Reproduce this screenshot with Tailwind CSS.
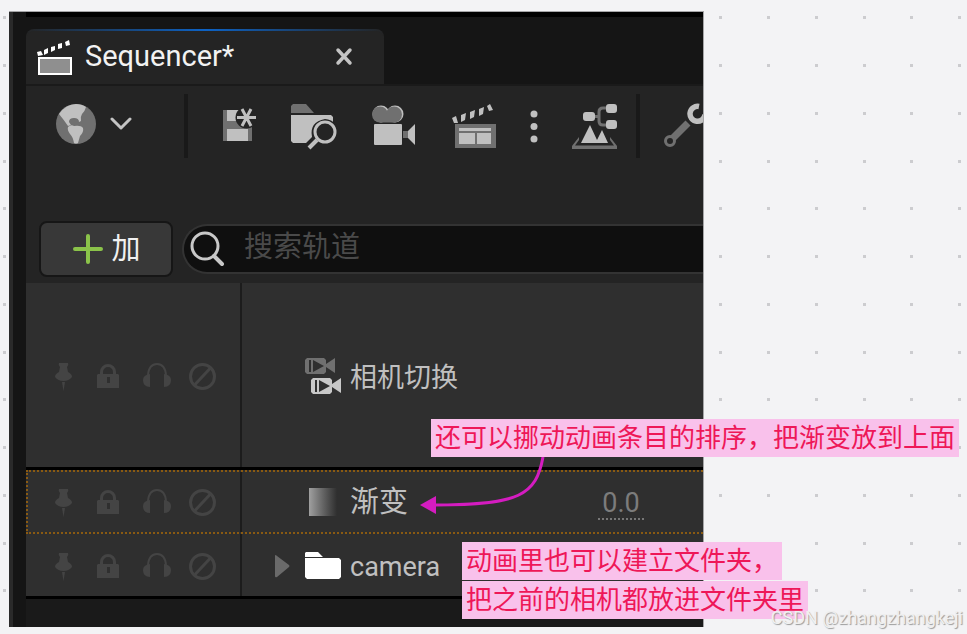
<!DOCTYPE html>
<html lang="zh-CN">
<head>
  <meta charset="UTF-8" />
  <meta name="viewport" content="width=device-width, initial-scale=1.0" />
  <script src="https://cdn.jsdelivr.net/npm/@tailwindcss/browser@4"></script>
  <title>Sequencer</title>
</head>
<body class="bg-[#f3f3f5] font-[Roboto,'Noto_Sans_CJK_SC',sans-serif]">
  <div class="relative min-h-screen overflow-hidden pt-[11px] pr-[263px] pb-2 pl-[9px]">

    <!-- dotted canvas -->
    <svg class="absolute inset-0 h-full w-full" aria-hidden="true">
      <defs>
        <pattern id="dots" x="3" y="16" width="191" height="191" patternUnits="userSpaceOnUse">
          <path fill="#cccccf" d="M0 0h3v3h-3zM48 0h3v3h-3zM96 0h3v3h-3zM143 0h3v3h-3zM0 48h3v3h-3zM48 48h3v3h-3zM96 48h3v3h-3zM143 48h3v3h-3zM0 96h3v3h-3zM48 96h3v3h-3zM96 96h3v3h-3zM143 96h3v3h-3zM0 144h3v3h-3zM48 144h3v3h-3zM96 144h3v3h-3zM143 144h3v3h-3z" />
        </pattern>
        <symbol id="pin" viewBox="0 0 32 32">
          <path fill="#444" d="M12 3h9q1 2-1 4l1 5q4 2 4 5-3 4-8.500 4T8 17q0-3 4-5l1-5q-2-2-1-4z" />
          <path fill="#444" d="M15 22h3l-1.500 9z" />
        </symbol>
        <symbol id="lock" viewBox="0 0 32 32">
          <path fill="none" stroke="#444" stroke-width="3" d="M8.500 15v-3a6.500 6.500 0 0 1 13 0v3" />
          <path fill="#444" fill-rule="evenodd" d="M5 14h20l1 1v13H4V15zM14 17v6h3v-6z" />
        </symbol>
        <symbol id="headphones" viewBox="0 0 32 32">
          <path fill="none" stroke="#444" stroke-width="2" d="M9 15q1-11 9-11t9 11" />
          <path fill="#444" d="M11 14v13q-7 0-7-7 0-5 7-6zM25 14v13q7 0 7-7 0-5-7-6z" />
        </symbol>
        <symbol id="ban" viewBox="0 0 32 32">
          <circle cx="17.500" cy="16.500" r="12" fill="none" stroke="#444" stroke-width="3" />
          <path stroke="#444" stroke-width="3" d="M9.500 25l16-17" />
        </symbol>
      </defs>
      <rect width="100%" height="100%" fill="url(#dots)" />
    </svg>

    <!-- editor window -->
    <main class="relative overflow-hidden border-t border-r border-[#a5a5a7] bg-[#151515]">
      <div class="border-l-4 border-[#2a2a2a] pl-[13px]">
        <div class="h-[5px] bg-black"></div>

        <div class="flex pt-3">
          <div class="w-[358px] rounded-t-lg bg-[linear-gradient(to_right,#242424,#0d62c4,#242424)] pt-[2px]">
            <div class="flex h-[53px] items-center rounded-t-lg bg-[#242424] pr-[30px] pb-[3px] pl-[10px]">
              <svg class="h-10 w-10" viewBox="0 0 40 40" aria-hidden="true">
                <path fill="#fff" d="M1 16l4-1 2 4-5 1zM8 14l4-2 0 5-4 2zM15 11l4-1 0 4-4 2zM22 8l4-1 0 5-4 1zM29 6l4-2 1 5-4 1z" />
                <rect x="3" y="22" width="32" height="16" fill="#8f8f8f" stroke="#fff" stroke-width="2" />
              </svg>
              <h1 class="ml-[9px] text-[29px] leading-9 text-[#f2f2f2]">Sequencer*</h1>
              <button class="ml-auto" aria-label="关闭">
                <svg class="h-5 w-5" viewBox="0 0 20 20"><path stroke="#c4c4c4" stroke-width="3.500" stroke-linecap="round" d="M4 4l12 13M16 4L4 17" /></svg>
              </button>
            </div>
          </div>
        </div>

        <!-- toolbar -->
        <div class="border-t-2 border-[#1a1a1a] bg-[#242424]">
          <div class="flex h-20 items-center overflow-hidden pl-[30px] [&_svg]:h-12 [&>*]:shrink-0">
            <button class="flex gap-[14px]" aria-label="世界">
              <svg class="w-10" viewBox="0 0 40 48">
                <circle cx="20" cy="22" r="20" fill="#707070" />
                <path fill="#c0c0c0" d="M3 12Q10 2 20 2q6 0 10 3-1 4-4 7-2 3-1 7l-2 1q0-4-5-4-5 0-5 4l2 3-3 1Q8 18 3 12z" />
                <path fill="#c0c0c0" d="M12 25q3-3 6-1 7-1 9 2 1 4-3 8l-2 7q-2 1-4 0-1-6-4-9-3-4-2-7z" />
              </svg>
              <svg class="w-[22px]" viewBox="0 0 22 48"><path fill="none" stroke="#c4c4c4" stroke-width="3" stroke-linecap="round" stroke-linejoin="round" d="M2 17l9 9 9-9" /></svg>
            </button>
            <div class="ml-[52px] h-16 w-1 bg-[#191919]"></div>
            <div class="ml-[21px] flex gap-8">
              <button aria-label="保存">
                <svg class="w-12" viewBox="0 0 48 48">
                  <path fill="#707070" d="M14 8h29v31H14z" />
                  <path fill="#c0c0c0" d="M18 8h14v11H18zM18 27h21v12H18z" />
                  <circle cx="37.500" cy="15.500" r="11" fill="#242424" />
                  <path stroke="#c0c0c0" stroke-width="3" d="M28 15.500h19M33 7l9 17M42 7l-9 17" />
                </svg>
              </button>
              <button aria-label="浏览">
                <svg class="w-12" viewBox="0 0 48 48">
                  <path fill="#707070" d="M4 2h13l8 9H2V4z" />
                  <path fill="#c0c0c0" d="M2 13h40l2 2v26H4l-2-2z" />
                  <path fill="#242424" d="M17 41l6-6q-3-15 13-18 6 0 12 6v25H17z" />
                  <circle cx="36" cy="30" r="10" fill="#242424" stroke="#c0c0c0" stroke-width="3" />
                  <path stroke="#c0c0c0" stroke-width="4" d="M28 38l-8 8" />
                </svg>
              </button>
              <button aria-label="创建摄像机">
                <svg class="w-12" viewBox="0 0 48 48">
                  <g fill="#c0c0c0"><circle cx="12" cy="12" r="8.500" /><circle cx="26" cy="12" r="8.500" /></g>
                  <g fill="#707070"><circle cx="11" cy="12.500" r="8" /><circle cx="25" cy="12.500" r="8" /><path d="M11 12h15v8.500H11z" /></g>
                  <rect x="5" y="22" width="28" height="21" rx="1" fill="#c0c0c0" />
                  <path fill="#707070" d="M34 29h5v7h-5z" />
                  <path fill="#c0c0c0" d="M39 29l7-7v21l-7-7z" />
                </svg>
              </button>
              <button aria-label="渲染影片">
                <svg class="w-12" viewBox="0 0 48 48">
                  <path fill="#c0c0c0" d="M3 16l4-2 2 7H5zM12 13l5-2-1 7-4 2zM21 10l5-2-1 7-4 2zM30 7l5-2-1 7-4 2zM38 4l3-2 3 6-4 1z" />
                  <rect x="6" y="22" width="41" height="24" fill="#707070" />
                  <path fill="#c0c0c0" d="M10 26h32v3H10zM10 31h16v11H10zM28 31h14v11H28z" />
                </svg>
              </button>
              <button aria-label="更多">
                <svg class="w-[10px]" viewBox="0 0 10 48" fill="#c0c0c0"><circle cx="5" cy="12" r="3.500" /><circle cx="5" cy="24.500" r="3.500" /><circle cx="5" cy="37" r="3.500" /></svg>
              </button>
              <button aria-label="导演蓝图">
                <svg class="w-12" viewBox="0 0 48 48">
                  <path fill="none" stroke="#707070" stroke-width="3" d="M24 14.500h4M36 6h-4q-4 0-4 4v9q0 4 4 4h4" />
                  <g fill="#c0c0c0"><rect x="12" y="10" width="12" height="9" rx="3" /><rect x="35" y="2" width="11" height="9" rx="3" /><rect x="35" y="18" width="11" height="9" rx="3" /></g>
                  <path fill="#c0c0c0" d="M10 41l9-18 7 15 5-10 6 13z" />
                  <path fill="#707070" d="M8 35v3l-4 5.500h39L39 38v-3l7 9v3H1v-3z" />
                </svg>
              </button>
            </div>
            <div class="ml-[17px] h-16 w-1 bg-[#191919]"></div>
            <button class="ml-[23px]" aria-label="选项">
              <svg class="w-12" viewBox="0 0 48 48" fill="none">
                <path stroke="#707070" stroke-width="7" d="M10 36l15-15" />
                <circle cx="7" cy="39" r="4.500" fill="#242424" stroke="#707070" stroke-width="3" />
                <path stroke="#c0c0c0" stroke-width="5.500" d="M36 4.500a7.500 7.500 0 1 0 6 8" />
              </svg>
            </button>
          </div>

          <div class="flex items-center gap-[9px] pt-[55px] pb-[6px] pl-[13px]">
            <button class="flex h-14 w-[134px] shrink-0 items-center justify-center gap-2 rounded-lg border-2 border-[#161616] bg-[#383838] text-[29px] leading-9 text-[#f0f0f0]">
              <svg class="h-8 w-8" viewBox="0 0 32 32"><path stroke="#8bc34a" stroke-width="4" stroke-linecap="round" d="M17 3v26M4 16h26" /></svg>
              加
            </button>
            <label class="flex h-[50px] min-w-0 flex-1 items-center rounded-l-full border-2 border-r-0 border-[#333] bg-[#0f0f0f] pl-[6px]">
              <svg class="h-9 w-9 shrink-0" viewBox="0 0 36 36" fill="none" stroke="#c8c8c8" stroke-linecap="round"><circle cx="15" cy="15" r="13" stroke-width="3" /><path stroke-width="4" d="M24 25l8 8" /></svg>
              <input type="search" placeholder="搜索轨道" aria-label="搜索轨道" class="ml-[18px] min-w-0 flex-1 bg-transparent pb-1 text-[29px] leading-9 text-[#c0c0c0] outline-none placeholder:text-[#4a4a4a]" />
            </label>
          </div>
        </div>

        <!-- tracks -->
        <ul class="bg-[#2f2f2f] text-[#c0c0c0] [&_use]:pointer-events-none">
          <li class="flex h-[184px] items-stretch">
            <div class="flex w-[216px] shrink-0 items-center gap-[14px] border-r-2 border-[#1c1c1c] pt-[2px] pl-[21px]">
              <button aria-label="固定"><svg class="h-8 w-8"><use href="#pin" /></svg></button>
              <button aria-label="锁定"><svg class="h-8 w-8"><use href="#lock" /></svg></button>
              <button aria-label="独奏"><svg class="h-8 w-8"><use href="#headphones" /></svg></button>
              <button aria-label="禁用"><svg class="h-8 w-8"><use href="#ban" /></svg></button>
            </div>
            <div class="flex flex-1 items-center pt-[2px] pl-[62px]">
              <svg class="h-10 w-[38px]" viewBox="0 0 38 40" aria-hidden="true">
                <path fill="#707070" d="M3 2h17l2 2v4l9-6v15l-9-6v5l-2 2H3l-2-2V4z" />
                <path fill="#2f2f2f" d="M5 4h2v12H5zM9 4l11 6-11 6z" />
                <path fill="#c8c8c8" d="M9 22h17l2 2v4l9-6v15l-9-6v5l-2 2H9l-2-2V24z" />
                <path fill="#2f2f2f" d="M11 24h2v12h-2zM15 24l11 6-11 6z" />
              </svg>
              <span class="ml-2 pt-1 text-[27px] leading-9">相机切换</span>
            </div>
          </li>
          <li class="flex h-[67px] items-stretch border-t-3 border-black">
            <div class="flex flex-1 border-2 border-r-0 border-dotted border-[#8a5a12]">
              <div class="flex w-[214px] shrink-0 items-center gap-[14px] border-r-2 border-[#1c1c1c] pl-[19px]">
                <button aria-label="固定"><svg class="h-8 w-8"><use href="#pin" /></svg></button>
                <button aria-label="锁定"><svg class="h-8 w-8"><use href="#lock" /></svg></button>
                <button aria-label="独奏"><svg class="h-8 w-8"><use href="#headphones" /></svg></button>
                <button aria-label="禁用"><svg class="h-8 w-8"><use href="#ban" /></svg></button>
              </div>
              <div class="flex flex-1 items-center pr-[59px] pl-[62px]">
                <div class="flex w-[38px] justify-center"><div class="h-7 w-7 bg-linear-to-r from-[#a0a0a0] to-[#2f2f2f]"></div></div>
                <label for="fade" class="ml-2 text-[29px] leading-9">渐变</label>
                <input id="fade" value="0.0" class="ml-auto h-9 w-[46px] border-b-2 border-dotted border-[#777] bg-transparent pt-1 text-center text-[27px] leading-8 text-[#7c7c7c] outline-none" />
              </div>
            </div>
          </li>
          <li class="flex h-[65px] items-stretch border-b-3 border-black">
            <div class="flex w-[216px] shrink-0 items-center gap-[14px] border-r-2 border-[#1c1c1c] pt-[2px] pl-[21px]">
              <button aria-label="固定"><svg class="h-8 w-8"><use href="#pin" /></svg></button>
              <button aria-label="锁定"><svg class="h-8 w-8"><use href="#lock" /></svg></button>
              <button aria-label="独奏"><svg class="h-8 w-8"><use href="#headphones" /></svg></button>
              <button aria-label="禁用"><svg class="h-8 w-8"><use href="#ban" /></svg></button>
            </div>
            <div class="flex flex-1 items-center pt-[2px] pl-8">
              <button aria-label="展开"><svg class="h-6 w-4" viewBox="0 0 16 24"><path fill="#6a6a6a" d="M1 2q0-2 2 0l12 9q1 1 0 2L3 23q-2 1-2-1z" /></svg></button>
              <svg class="ml-[14px] h-8 w-[38px]" viewBox="0 0 38 32" fill="#fff" aria-hidden="true"><path d="M2 2h12l5 5H1V3zM1 8h34l2 2v17l-2 2H3l-2-2z" /></svg>
              <span class="ml-2 pt-[2px] text-[27px] leading-9">camera</span>
            </div>
          </li>
        </ul>
        <div class="h-[28px] bg-[#1a1a1a]"></div>
      </div>
    </main>

    <!-- notes laid over the window -->
    <svg class="absolute top-[457px] left-[420px] h-[60px] w-[130px]" viewBox="0 0 130 60" aria-hidden="true">
      <path fill="none" stroke="#d41cc0" stroke-width="3" d="M123 0C116 38 100 48 15 48" />
      <path fill="#d41cc0" d="M0 48l16-9v18z" />
    </svg>
    <p class="absolute top-[419px] left-[431px] bg-[#f9c1eb] px-1 text-[26px] leading-[38px] whitespace-nowrap text-[#ee1758]">还可以挪动动画条目的排序，把渐变放到上面</p>
    <div class="absolute top-[542px] left-[462px] flex flex-col items-start gap-px text-[26px] leading-[38px] whitespace-nowrap text-[#ee1758]">
      <p class="bg-[#f9c1eb] px-1">动画里也可以建立文件夹，</p>
      <p class="bg-[#f9c1eb] px-1">把之前的相机都放进文件夹里</p>
    </div>
    <p class="absolute right-[4px] bottom-[5px] text-[18px] leading-6 text-[#f0f0f0] [text-shadow:1px_1px_1px_#999]">CSDN @zhangzhangkeji</p>
  </div>
</body>
</html>
